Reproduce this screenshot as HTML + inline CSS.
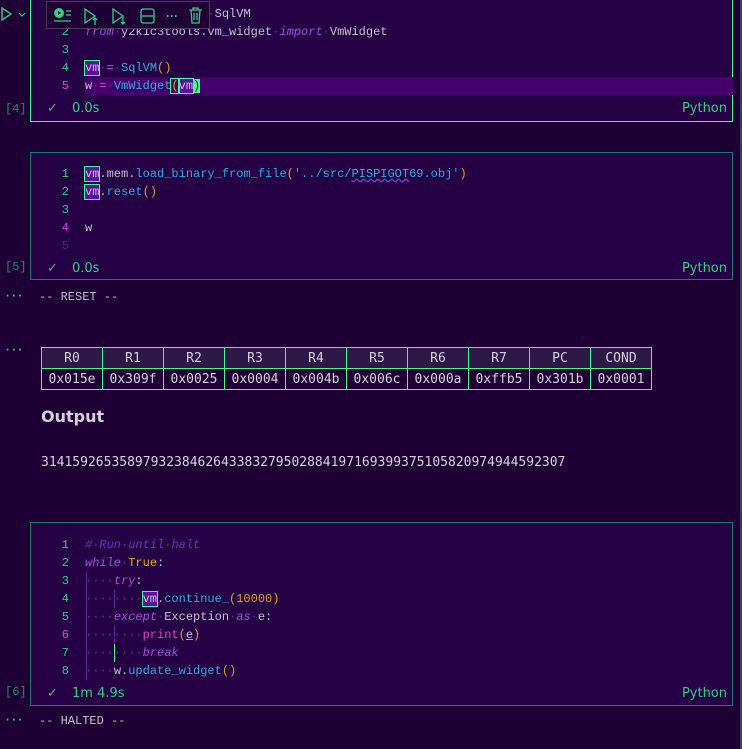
<!DOCTYPE html>
<html><head><meta charset="utf-8"><style>
*{margin:0;padding:0;box-sizing:border-box}
body{width:742px;height:749px;background:#1e0034;position:relative;overflow:hidden;font-family:"Liberation Mono",monospace;font-size:12px;color:#c8c0d0}
.cell{position:absolute;left:30px;width:703px;background:#250044;border:1px solid #1b7a6a}
.cell.act{border-color:#3dfc8a}
.ln{position:absolute;left:0;width:38px;text-align:right;color:#30d080;font-size:12px;line-height:18px;height:18px}
.code{position:absolute;left:54px;white-space:pre;line-height:18px;height:18px}
.d{color:#5a3e78}
.k{color:#a050e0;font-style:italic}
.f{color:#2ab0d8}
.p{color:#e0a020}
.m{color:#e040d0}
.c{color:#7030c0;font-style:italic}
.y{color:#e0b000}
.box{outline:1px solid #3dfc8a;background:#5a10a0}
.st{position:absolute;font-family:"DejaVu Sans","Liberation Sans",sans-serif;font-size:13px;color:#30d080}
.ex{position:absolute;left:5px;font-size:12px;color:#1b8a6a}
.dots{position:absolute;left:4px;color:#30d080;font-weight:bold;font-size:12px;letter-spacing:-1px}
.out{position:absolute;left:39px;font-size:12px;color:#c8c0d0;white-space:pre}
table{position:absolute;left:41px;top:347px;border-collapse:collapse;font-family:"DejaVu Sans Mono",monospace;font-size:13px;color:#d8d0e0}
td,th{border:1px solid #3dfc8a;width:61px;height:21px;text-align:center;font-weight:normal;padding:0}
th{background:#2e1848}
.sb{position:absolute;right:0;top:0;width:2px;height:749px;background:#3a4060}
</style></head><body>
<div class="sb"></div>

<!-- cell 1 -->
<div class="cell act" style="top:-2px;height:124px">
  <div class="ln" style="top:6px">1</div><div class="code" style="top:6px"><span class="k">from</span><span class="d">·</span><span style="text-decoration:underline wavy #8040e0">sqlvm</span><span class="d">·</span><span class="k">import</span><span class="d">·</span>SqlVM</div>
  <div class="ln" style="top:24px">2</div><div class="code" style="top:24px"><span class="k">from</span><span class="d">·</span>y2k1c3tools.vm_widget<span class="d">·</span><span class="k">import</span><span class="d">·</span>VmWidget</div>
  <div class="ln" style="top:42px">3</div>
  <div class="ln" style="top:60px">4</div><div class="code" style="top:60px"><span class="box">vm</span><span class="d">·</span><span class="m">=</span><span class="d">·</span><span class="f">SqlVM</span><span class="p">()</span></div>
  <div style="position:absolute;left:54px;top:78px;width:648px;height:18px;background:#46006e"></div>
  <div class="ln" style="top:78px;color:#e040e0">5</div><div class="code" style="top:78px">w<span class="d">·</span><span class="m">=</span><span class="d">·</span><span class="f">VmWidget</span><span style="outline:1px solid #3dfc8a;color:#e0a020">(</span><span class="box">vm</span><span style="background:#3dfc8a;color:#250044">)</span></div>
  <div class="st" style="left:16px;top:102px;color:#8a9a90">✓</div>
  <div class="st" style="left:41px;top:102px">0.0s</div>
  <div class="st" style="right:5px;top:102px">Python</div>
</div>
<div class="ex" style="top:102px">[4]</div>
<svg style="position:absolute;left:0;top:6px" width="30" height="18" viewBox="0 0 30 18"><path d="M2 2 L11 8 L2 14 Z" fill="none" stroke="#30d080" stroke-width="1.4"/><path d="M19 7 L22 10 L25 7" fill="none" stroke="#30d080" stroke-width="1.2"/></svg>
<div style="position:absolute;left:46px;top:1px;width:164px;height:28px;background:#1e0034;border:1px solid #4a3a5a">
<svg width="164" height="28" viewBox="0 0 164 28" fill="none" stroke="#30d080" stroke-width="1.3">
<circle cx="12" cy="11" r="5" fill="#30d080" stroke="none"/><path d="M11 9 L14 11 L11 13Z" fill="#1e0034" stroke="none"/><path d="M19 9 H24 M19 13 H24 M7 19 H24"/>
<path d="M38 7 L48 14 L38 21Z"/><path d="M48 16 V23 M46 18 L48 16 L50 18"/>
<path d="M66 7 L76 14 L66 21Z"/><path d="M76 15 V22 M74 20 L76 22 L78 20"/>
<rect x="94" y="7" width="13" height="14" rx="2"/><path d="M94 14 H107"/>
<path d="M120 14 h1.5 M124 14 h1.5 M128 14 h1.5" stroke-width="2"/>
<path d="M142 8 H155 M146 8 V6 H151 V8 M144 8 L145 21 H152 L153 8 M147 11 V18 M150 11 V18"/>
</svg></div>

<!-- cell 2 -->
<div class="cell" style="top:152px;height:128px">
  <div class="ln" style="top:12px">1</div><div class="code" style="top:12px"><span class="box">vm</span>.mem.<span class="f">load_binary_from_file</span><span class="p">(</span><span class="f">'../src/<span style="text-decoration:underline wavy #8040e0">PISPIGOT</span>69.obj'</span><span class="p">)</span></div>
  <div class="ln" style="top:30px">2</div><div class="code" style="top:30px"><span class="box">vm</span>.<span class="f">reset</span><span class="p">()</span></div>
  <div class="ln" style="top:48px">3</div>
  <div class="ln" style="top:66px;color:#e040e0">4</div><div class="code" style="top:66px">w</div>
  <div class="ln" style="top:84px;color:#4a3070">5</div>
  <div class="st" style="left:16px;top:108px;color:#8a9a90">✓</div>
  <div class="st" style="left:41px;top:108px">0.0s</div>
  <div class="st" style="right:5px;top:108px">Python</div>
</div>
<div class="ex" style="top:260px">[5]</div>

<div class="dots" style="top:289px">···</div>
<div class="out" style="top:290px">-- RESET --</div>
<div class="dots" style="top:343px">···</div>

<table>
<tr><th>R0</th><th>R1</th><th>R2</th><th>R3</th><th>R4</th><th>R5</th><th>R6</th><th>R7</th><th>PC</th><th>COND</th></tr>
<tr><td>0x015e</td><td>0x309f</td><td>0x0025</td><td>0x0004</td><td>0x004b</td><td>0x006c</td><td>0x000a</td><td>0xffb5</td><td>0x301b</td><td>0x0001</td></tr>
</table>
<div style="position:absolute;left:41px;top:407px;font-family:'DejaVu Sans',sans-serif;font-weight:bold;font-size:16px;color:#d8d0e0">Output</div>
<div style="position:absolute;left:41px;top:455px;font-family:'DejaVu Sans Mono',monospace;font-size:13px;color:#d8d0e0">3141592653589793238462643383279502884197169399375105820974944592307</div>

<!-- cell 3 -->
<div class="cell" style="top:522px;height:184px">
  <div class="ln" style="top:13px">1</div><div class="code" style="top:13px"><span class="c">#<span class="d">·</span>Run<span class="d">·</span>until<span class="d">·</span>halt</span></div>
  <div class="ln" style="top:31px">2</div><div class="code" style="top:31px"><span class="k">while</span><span class="d">·</span><span class="y">True</span>:</div>
  <div class="ln" style="top:49px">3</div><div class="code" style="top:49px"><span class="d">····</span><span class="k">try</span>:</div>
  <div class="ln" style="top:67px">4</div><div class="code" style="top:67px"><span class="d">········</span><span class="box">vm</span>.<span class="f">continue_</span><span class="p">(10000)</span></div>
  <div class="ln" style="top:85px">5</div><div class="code" style="top:85px"><span class="d">····</span><span class="k">except</span><span class="d">·</span>Exception<span class="d">·</span><span class="k">as</span><span class="d">·</span>e:</div>
  <div class="ln" style="top:103px;color:#e040e0">6</div><div class="code" style="top:103px"><span class="d">········</span><span class="m">print</span><span class="p">(</span><span style="text-decoration:underline #e0b000">e</span><span class="p">)</span></div>
  <div class="ln" style="top:121px">7</div><div class="code" style="top:121px"><span class="d">········</span><span class="k">break</span></div>
  <div class="ln" style="top:139px">8</div><div class="code" style="top:139px"><span class="d">····</span>w.<span class="f">update_widget</span><span class="p">()</span></div>
  <div style="position:absolute;left:55px;top:49px;width:1px;height:108px;background:#6020a0"></div>
  <div style="position:absolute;left:83px;top:67px;width:1px;height:18px;background:#6020a0"></div>
  <div style="position:absolute;left:83px;top:103px;width:1px;height:18px;background:#6020a0"></div>
  <div style="position:absolute;left:83px;top:121px;width:1px;height:18px;background:#3dfc8a"></div>
  <div class="st" style="left:16px;top:163px;color:#8a9a90">✓</div>
  <div class="st" style="left:41px;top:163px">1m 4.9s</div>
  <div class="st" style="right:5px;top:163px">Python</div>
</div>
<div class="ex" style="top:685px">[6]</div>
<div class="dots" style="top:713px">···</div>
<div class="out" style="top:714px">-- HALTED --</div>
</body></html>
